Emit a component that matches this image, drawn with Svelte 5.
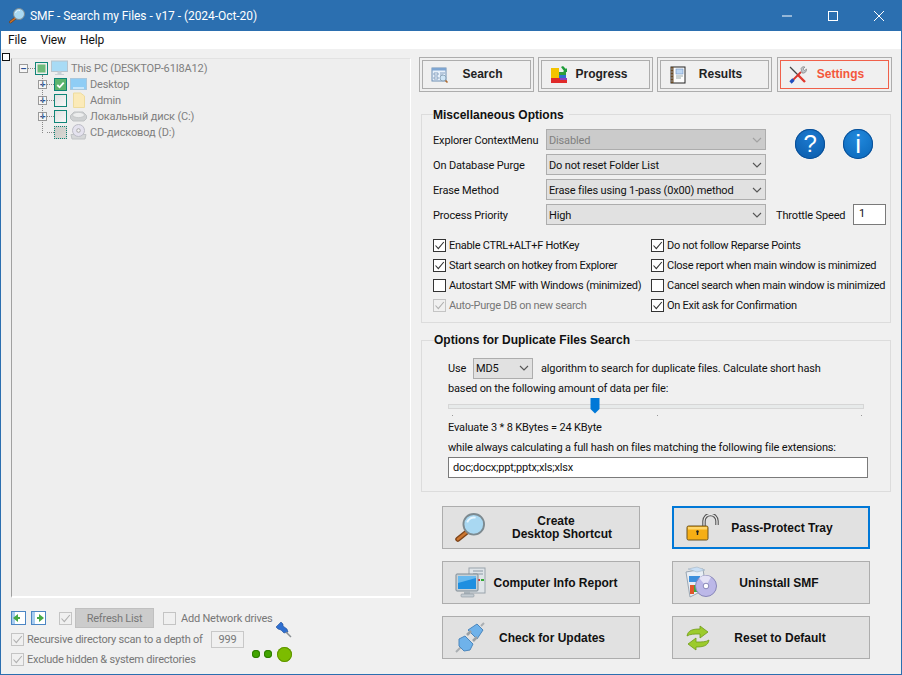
<script>
  const tabs = [
    { id: "search", label: "Search" },
    { id: "progress", label: "Progress" },
    { id: "results", label: "Results" },
    { id: "settings", label: "Settings" }
  ];

  const selects = [
    { label: "Explorer ContextMenu", value: "Disabled", disabled: true },
    { label: "On Database Purge", value: "Do not reset Folder List" },
    { label: "Erase Method", value: "Erase files using 1-pass (0x00) method" },
    { label: "Process Priority", value: "High" }
  ];

  const optsLeft = [
    { label: "Enable CTRL+ALT+F HotKey", on: true },
    { label: "Start search on hotkey from Explorer", on: true },
    { label: "Autostart SMF with Windows (minimized)", on: false },
    { label: "Auto-Purge DB on new search", on: true, disabled: true }
  ];
  const optsRight = [
    { label: "Do not follow Reparse Points", on: true },
    { label: "Close report when main window is minimized", on: true },
    { label: "Cancel search when main window is minimized", on: false },
    { label: "On Exit ask for Confirmation", on: true }
  ];

  const tree = [
    { label: "Desktop", state: "checked", icon: "desktop", exp: true },
    { label: "Admin", state: "", icon: "folder", exp: true },
    { label: "Локальный диск (C:)", state: "", icon: "disk", exp: true },
    { label: "CD-дисковод (D:)", state: "dotted", icon: "cd", exp: false }
  ];
</script>

{#snippet check(on, disabled, label)}
  <label class="check" class:disabled>
    <span class="box">
      {#if on}
        <svg width="13" height="13" viewBox="0 0 13 13"><path d="M2.5 6.500 5.300 9.600 10.800 3" fill="none" stroke="currentColor" stroke-width="1.100" /></svg>
      {/if}
    </span>
    {#if label}<span>{label}</span>{/if}
  </label>
{/snippet}

{#snippet chevron()}
  <svg class="chev" width="10" height="6" viewBox="0 0 10 6"><path d="M1 1 5 5 9 1" fill="none" stroke="#555" stroke-width="1.100" /></svg>
{/snippet}

{#snippet magnifier(size)}
  <svg width={size} height={size} viewBox="0 0 32 32">
    <path d="M13 20 3 28" stroke="#7d4318" stroke-width="5.500" stroke-linecap="round" />
    <path d="M13 20 3 28" stroke="#cc7630" stroke-width="2.500" stroke-linecap="round" />
    <circle cx="20" cy="12" r="11" fill="#a9d8f2" stroke="#7d8a90" stroke-width="2" />
    <path d="M13 10a7.500 7.500 0 0 1 9-5" fill="none" stroke="#e6f6ff" stroke-width="2" />
  </svg>
{/snippet}

{#snippet treeIcon(kind)}
  {#if kind === "pc"}
    <svg width="17" height="16" viewBox="0 0 17 16"><rect x="0.500" y="1" width="16" height="10.500" fill="#a8dbf5" stroke="#b8c4cc" /><path d="M7 12h3v2H7zM4 14.500h9" fill="#c8d0d6" stroke="#c8d0d6" /></svg>
  {:else if kind === "desktop"}
    <svg width="17" height="14" viewBox="0 0 17 14"><rect x="0.500" y="1.500" width="16" height="11" fill="#8fcdf5" stroke="#a9c7dc" /><path d="M3 11h11" stroke="#fff" /></svg>
  {:else if kind === "folder"}
    <svg width="12" height="16" viewBox="0 0 12 16"><path d="M.5 1h7l4 3v11.500h-11z" fill="#fbeab8" stroke="#eedc9e" /></svg>
  {:else if kind === "disk"}
    <svg width="17" height="11" viewBox="0 0 17 11"><path d="M.5 4.500 4 1h9l3.500 3.500v3L14 10H3L.5 7.500z" fill="#cfd1d2" stroke="#bfc2c4" /><ellipse cx="8.500" cy="4" rx="6" ry="2.600" fill="#eceded" stroke="#c8cacb" /></svg>
  {:else}
    <svg width="17" height="16" viewBox="0 0 17 16"><path d="M1 10.500h15l-1 4.500H2z" fill="#d6d8d9" stroke="#c0c3c5" /><circle cx="8.500" cy="6.500" r="6" fill="#e4e2ee" stroke="#bcbcc6" /><circle cx="8.500" cy="6.500" r="1.800" fill="#f4f4f4" stroke="#aaa" /></svg>
  {/if}
{/snippet}

{#snippet tabIcon(id)}
  {#if id === "search"}
    <svg width="18" height="18" viewBox="0 0 18 18"><rect x="1" y="2" width="14" height="13" fill="#e8f1fa" stroke="#6f8fb4" /><rect x="1" y="2" width="14" height="2.500" fill="#7fa6d2" /><path d="M3 7h4v2H3zM3 11h4v2H3zM9 7h5M9 9h3" fill="#fff" stroke="#6f8fb4" stroke-width=".8" /><circle cx="12" cy="12" r="3" fill="#cfe6f7" stroke="#8fa8bc" /><path d="m14.500 14.500 2 2" stroke="#b06a2c" stroke-width="1.600" /></svg>
  {:else if id === "progress"}
    <svg width="18" height="18" viewBox="0 0 18 18"><rect x="1" y="2" width="8" height="10" fill="#f4c400" /><rect x="9" y="6" width="7" height="3" fill="#2e9e3a" /><rect x="9" y="9" width="7" height="3" fill="#2d6fd0" /><rect x="1" y="12" width="16" height="5" fill="#e02a2a" /><rect x="10" y="12" width="7" height="2" fill="#8a3fc0" /><path d="m11 1 2-1 3 3 1-1v4h-4l1-1z" fill="#1f9d3a" /></svg>
  {:else if id === "results"}
    <svg width="18" height="18" viewBox="0 0 18 18"><rect x="2" y="1" width="14" height="16" fill="#fdfdfd" stroke="#222" /><rect x="2" y="1" width="2.500" height="16" fill="#6b4a24" /><path d="M1 3h3M1 6h3M1 9h3M1 12h3M1 15h3" stroke="#999" /><rect x="7" y="3" width="7" height="5" fill="#bcd6f2" stroke="#6c92c4" stroke-width=".6" /><path d="M7 10h7M7 12h5" stroke="#9aa" /></svg>
  {:else}
    <svg width="18" height="18" viewBox="0 0 18 18"><path d="M1 1 9 9" stroke="#444" stroke-width="1.200" /><path d="m9 9 7 7" stroke="#e0392e" stroke-width="2.400" /><path d="M3 15 12 6" stroke="#d8342c" stroke-width="1.800" /><path d="m1.500 16.500 3-3" stroke="#1f4fc0" stroke-width="3.200" /><path d="M12 2.500a3 3 0 0 1 4-1.500l-2 2 1.500 1.500 2-1.500a3.500 3.500 0 0 1-4.500 4z" fill="#c0c4c8" stroke="#666" stroke-width=".5" /></svg>
  {/if}
{/snippet}

{#snippet actionIcon(kind)}
  {#if kind === "magnifier"}
    {@render magnifier(30)}
  {:else if kind === "lock"}
    <svg width="34" height="28" viewBox="0 0 34 28">
      <path d="M18 13V7a6.500 6.500 0 0 1 13 0v4" fill="none" stroke="#555" stroke-width="3.500" />
      <path d="M18 13V7a6.500 6.500 0 0 1 13 0v4" fill="none" stroke="#e8e8e8" stroke-width="1.300" />
      <rect x="1" y="12" width="21" height="14" rx="1.500" fill="#f6ae14" stroke="#6a5220" />
      <rect x="2" y="13" width="19" height="2.500" fill="#ffd66a" />
      <path d="M11.500 17v4" stroke="#222" stroke-width="1.400" /><circle cx="11.500" cy="17.500" r="1.200" fill="#222" />
    </svg>
  {:else if kind === "computer"}
    <svg width="32" height="32" viewBox="0 0 32 32">
      <rect x="14" y="1" width="16" height="25" fill="#dfe4e8" stroke="#9aa4ac" />
      <path d="M18 4h10M18 7h10" stroke="#8a98a4" /><path d="M22 13h3" stroke="#d33" stroke-width="2" /><path d="M26 13h3" stroke="#3a3" stroke-width="2" />
      <rect x="1" y="7" width="22" height="17" rx="1" fill="#c7d0d6" stroke="#7f8b94" />
      <rect x="3" y="9" width="18" height="13" fill="#1f8fe0" />
      <path d="M3 16 21 11v-2H3z" fill="#67b9ef" />
      <path d="M9 24h6v3H9z" fill="#a9b3ba" /><rect x="6" y="27" width="13" height="3" rx="1" fill="#c4ccd2" stroke="#8b959d" stroke-width=".6" />
    </svg>
  {:else if kind === "uninstall"}
    <svg width="32" height="34" viewBox="0 0 32 34">
      <path d="M1 6 18 3l3 20-16 8z" fill="#e8eef5" stroke="#9aa6b2" />
      <path d="M3 3 12 1l8 3-8 2z" fill="#c9dff5" stroke="#9ab" stroke-width=".5" />
      <rect x="4" y="10" width="11" height="6" fill="#3d8fdc" />
      <rect x="5" y="19" width="4" height="9" fill="#e0562a" /><rect x="9" y="19" width="4" height="7" fill="#3cae3c" />
      <circle cx="21" cy="20" r="10.500" fill="#bcb8e8" stroke="#8886b8" />
      <path d="M21 20 14 12a10 10 0 0 1 12-1z" fill="#e4e2f6" />
      <circle cx="21" cy="20" r="2.800" fill="#fff" stroke="#8886b8" />
    </svg>
  {:else if kind === "plug"}
    <svg width="30" height="32" viewBox="0 0 30 32">
      <path d="m13 8 9-6 6 6-6 9z" fill="#6fb2ea" stroke="#4c86bc" />
      <path d="M1 30 6 25" stroke="#a9aeb2" stroke-width="2" /><path d="m26 4 3-3" stroke="#a9aeb2" stroke-width="2" />
      <path d="m4 17 6-3 8 8-3 6-6 1-5-5z" fill="#6fb2ea" stroke="#4c86bc" />
      <path d="m12 13 4-4M18 19l4-4" stroke="#9aa0a4" stroke-width="2.500" />
    </svg>
  {:else}
    <svg width="26" height="26" viewBox="0 0 26 26">
      <path d="M2 11C3 5 8 4 15 4V1l8 6-8 6V9C9 9 5 9 2 11z" fill="#9ccb2c" stroke="#6e9a18" stroke-width=".8" />
      <path d="M24 15c-1 6-6 7-13 7v3l-8-6 8-6v4c6 0 10 0 13-2z" fill="#9ccb2c" stroke="#6e9a18" stroke-width=".8" />
    </svg>
  {/if}
{/snippet}

{#snippet action(kind, lines, focused, pad)}
  <button class="action" class:focused style="padding-left:{pad}px">
    <span class="action-icon">{@render actionIcon(kind)}</span>
    <span class="action-label" class:single={lines.length === 1}>
      {#each lines as l, i}<span class:short={lines.length > 1 && i === 0}>{l}</span>{/each}
    </span>
  </button>
{/snippet}

<div class="window">
  <header class="titlebar">
    <span class="app-icon">{@render magnifier(16)}</span>
    <span class="title">SMF - Search my Files - v17 - (2024-Oct-20)</span>
    <div class="caption">
      <svg width="46" height="16" viewBox="0 0 46 16"><path d="M18 8h10" stroke="#fff" /></svg>
      <svg width="46" height="16" viewBox="0 0 46 16"><rect x="18.500" y="3.500" width="9" height="9" fill="none" stroke="#fff" /></svg>
      <svg width="46" height="16" viewBox="0 0 46 16"><path d="m18 3 10 10M28 3 18 13" stroke="#fff" /></svg>
    </div>
  </header>

  <nav class="menubar">
    <span>File</span><span>View</span><span>Help</span>
  </nav>

  <main class="client">
    <section class="left">
      <span class="corner"></span>
      <div class="tree">
        <div class="node root">
          <span class="exp">–</span>
          <span class="dots"></span>
          <span class="tcheck mixed"></span>
          <span class="ticon">{@render treeIcon("pc")}</span>
          <span class="tlabel">This PC (DESKTOP-61I8A12)</span>
        </div>
        <div class="children">
          <span class="vline"></span>
          {#each tree as n}
            <div class="node">
              {#if n.exp}<span class="exp">+</span>{:else}<span class="exp none"></span>{/if}
              <span class="dots"></span>
              <span class="tcheck {n.state}">
                {#if n.state === "checked"}
                  <svg width="12" height="12" viewBox="0 0 12 12"><path d="M2.500 6 5 8.500 9.500 3.500" fill="none" stroke="#fff" stroke-width="2" /></svg>
                {/if}
              </span>
              <span class="ticon">{@render treeIcon(n.icon)}</span>
              <span class="tlabel">{n.label}</span>
            </div>
          {/each}
        </div>
      </div>

      <div class="tree-controls">
        <div class="row first">
          <span class="nav-btn">
            <svg width="15" height="14" viewBox="0 0 15 14"><rect x=".5" y=".5" width="14" height="13" fill="#fff" stroke="#4c86c4" /><rect x="1" y="1" width="3" height="12" fill="#a8cdf0" /><path d="M2 7 7 3v8z" fill="#45a845" /><path d="M7 6h2v2H7z" fill="#45a845" /></svg>
          </span>
          <span class="nav-btn">
            <svg width="15" height="14" viewBox="0 0 15 14"><rect x=".5" y=".5" width="14" height="13" fill="#fff" stroke="#4c86c4" /><rect x="1" y="1" width="3" height="12" fill="#a8cdf0" /><path d="M13 7 8 3v8z" fill="#45a845" /><path d="M6 6h2v2H6z" fill="#45a845" /></svg>
          </span>
          <span class="refresh-check">{@render check(true, true, "")}</span>
          <button class="refresh">Refresh List</button>
          <span class="net-check">{@render check(false, true, "Add Network drives")}</span>
          <svg class="pin" width="17" height="17" viewBox="0 0 17 17">
            <path d="M1 6 6 1 8 3 8 5 12 8 13 11 9 12 6 9 3 8Z" fill="#2f6fd0" stroke="#234f96" stroke-width=".6" />
            <path d="m11 11 5 5" stroke="#8a8f94" stroke-width="1.500" />
          </svg>
        </div>
        <div class="row depth-row">
          {@render check(true, true, "Recursive directory scan to a depth of")}
          <span class="depth">999</span>
        </div>
        <div class="row">
          {@render check(true, true, "Exclude hidden & system directories")}
          <span class="leds"><i></i><i></i><i class="big"></i></span>
        </div>
      </div>
    </section>

    <section class="right">
      <div class="tabs">
        {#each tabs as t}
          <button class="tab" class:active={t.id === "settings"}>
            <span class="tab-inner">
              {@render tabIcon(t.id)}
              <b>{t.label}</b>
            </span>
          </button>
        {/each}
      </div>

      <fieldset class="group misc">
        <legend>Miscellaneous Options</legend>
        <div class="misc-top">
          <div class="selects">
            {#each selects as s}
              <div class="sel-row">
                <span class="sel-label">{s.label}</span>
                <div class="select" class:disabled={s.disabled}>
                  <span class="sel-value">{s.value}</span>
                  {@render chevron()}
                </div>
              </div>
            {/each}
          </div>
          <div class="side">
            <div class="info-btns">
              <span class="round q">?</span>
              <span class="round i">i</span>
            </div>
            <div class="throttle">
              <span class="throttle-label">Throttle Speed</span>
              <span class="num">1</span>
            </div>
          </div>
        </div>
        <div class="opts">
          <div class="opt-col">
            {#each optsLeft as o}{@render check(o.on, o.disabled, o.label)}{/each}
          </div>
          <div class="opt-col">
            {#each optsRight as o}{@render check(o.on, o.disabled, o.label)}{/each}
          </div>
        </div>
      </fieldset>

      <fieldset class="group dup">
        <legend>Options for Duplicate Files Search</legend>
        <div class="line use">
          <span class="use-label">Use</span>
          <div class="select md5"><span>MD5</span>{@render chevron()}</div>
          <span>algorithm to search for duplicate files. Calculate short hash</span>
        </div>
        <div class="line">based on the following amount of data per file:</div>
        <div class="slider">
          <div class="track"></div>
          <svg class="thumb" width="10" height="16" viewBox="0 0 10 16"><path d="M.5 0h9v11l-4.500 4.500L.5 11z" fill="#0078d7" /></svg>
          <div class="ticks"><i></i><i></i><i></i></div>
        </div>
        <div class="line">Evaluate 3 * 8 KBytes = 24 KByte</div>
        <div class="line">while always calculating a full hash on files matching the following file extensions:</div>
        <div class="ext">doc;docx;ppt;pptx;xls;xlsx</div>
      </fieldset>

      <div class="actions">
        {@render action("magnifier", ["Create", "Desktop Shortcut"], false, 48)}
        {@render action("lock", ["Pass-Protect Tray"], true, 28)}
        {@render action("computer", ["Computer Info Report"], false, 35)}
        {@render action("uninstall", ["Uninstall SMF"], false, 22)}
        {@render action("plug", ["Check for Updates"], false, 28)}
        {@render action("refresh", ["Reset to Default"], false, 24)}
      </div>
    </section>
  </main>
</div>

<style>
  :global(body) {
    margin: 0;
    background: #f0f0f0;
  }

  .window {
    width: 902px;
    height: 675px;
    box-sizing: border-box;
    border: 1px solid #2b6fb0;
    border-top: none;
    display: flex;
    flex-direction: column;
    font-family: Roboto, "Liberation Sans", sans-serif;
    font-size: 11px;
    letter-spacing: -0.15px;
    color: #111;
    background: #f0f0f0;
    overflow: hidden;
  }

  .titlebar {
    height: 31px;
    flex: none;
    margin: 0 -1px;
    background: #2b6fb0;
    color: #fff;
    display: flex;
    align-items: center;
    font-size: 12px;
    letter-spacing: -0.05px;
    padding-left: 9px;
  }
  .app-icon { display: flex; margin-right: 5px; }
  .title { flex: 1; }
  .caption { display: flex; }

  .menubar {
    height: 18px;
    flex: none;
    background: #fff;
    display: flex;
    align-items: center;
    gap: 14px;
    padding-left: 7px;
    font-size: 12px;
    letter-spacing: -0.1px;
  }

  .client {
    flex: 1;
    display: flex;
    min-height: 0;
  }

  .left {
    width: 418px;
    flex: none;
    position: relative;
    display: flex;
    flex-direction: column;
    padding: 9px 0 0 10px;
    box-sizing: border-box;
  }
  .corner {
    position: absolute;
    left: 1px;
    top: 4px;
    width: 6px;
    height: 6px;
    background: #fff;
    border: 1px solid #111;
  }

  .tree {
    width: 400px;
    height: 540px;
    flex: none;
    box-sizing: border-box;
    border-left: 1px solid #a0a0a0;
    border-top: 1px solid #e2e2e2;
    border-bottom: 2px solid #fff;
    border-right: 1px solid #fff;
    background: #eeeeee;
    padding: 1px 0 0 7px;
    color: #7f7f7f;
  }
  .node {
    height: 16px;
    display: flex;
    align-items: center;
  }
  .exp {
    width: 9px;
    height: 9px;
    box-sizing: border-box;
    border: 1px solid #999;
    background: #f6f6f6;
    color: #2a4f96;
    font: bold 10px/7px "Liberation Sans", sans-serif;
    text-align: center;
    flex: none;
  }
  .exp.none { border: none; background: none; }
  .dots {
    width: 7px;
    border-top: 1px dotted #888;
    flex: none;
  }
  .tcheck {
    width: 13px;
    height: 13px;
    box-sizing: border-box;
    border: 1px solid #0f8577;
    background: linear-gradient(135deg, #e0e0e0, #f8f8f8);
    flex: none;
    display: flex;
  }
  .tcheck.mixed {
    background: #6cbb7a;
    box-shadow: inset 0 0 0 1.500px #eee;
  }
  .tcheck.checked { background: #5cb46e; }
  .tcheck.dotted {
    border-style: dotted;
    background: linear-gradient(135deg, #cbcbc7, #d8d8d4);
  }
  .ticon {
    width: 17px;
    margin: 0 3px 0 3px;
    display: flex;
    justify-content: center;
    flex: none;
  }
  .tlabel { white-space: nowrap; }
  .children {
    position: relative;
    padding-left: 19px;
  }
  .vline {
    position: absolute;
    left: 23px;
    top: -1px;
    bottom: 7px;
    border-left: 1px dotted #888;
  }

  .tree-controls {
    display: flex;
    flex-direction: column;
    padding-top: 9px;
    color: #777;
    letter-spacing: -0.22px;
  }
  .row {
    display: flex;
    align-items: center;
    height: 20px;
    width: 281px;
  }
  .row.first { height: 22px; }
  .row.depth-row { width: 233px; }
  .nav-btn { display: flex; margin-right: 5px; }
  .refresh-check { margin: 0 3px 0 8px; display: flex; }
  .refresh {
    width: 79px;
    height: 20px;
    flex: none;
    border: 1px solid #c0c0c0;
    background: #cccccc;
    color: #777;
    font: inherit;
    letter-spacing: inherit;
    padding: 0;
  }
  .net-check { margin-left: 9px; }
  .net-check .check { gap: 5px; }
  .pin { margin: 22px 0 0 auto; flex: none; }
  .depth {
    width: 33px;
    height: 17px;
    box-sizing: border-box;
    border: 1px solid #c8c8c8;
    background: #f0f0f0;
    text-align: center;
    line-height: 15px;
    margin-left: auto;
    flex: none;
  }
  .leds {
    display: flex;
    align-items: center;
    gap: 4px;
    margin: -10px 0 0 auto;
  }
  .leds i {
    width: 8px;
    height: 8px;
    border-radius: 50%;
    background: #42a400;
    box-shadow: inset 0 0 0 1px #2d7d00;
  }
  .leds i.big {
    width: 15px;
    height: 15px;
    margin-left: 1px;
    background: #7cbc00;
    box-shadow: inset 0 0 0 1px #5f9400;
  }

  .check {
    display: flex;
    align-items: center;
    gap: 3px;
    white-space: nowrap;
    height: 20px;
  }
  .box {
    width: 13px;
    height: 13px;
    box-sizing: border-box;
    border: 1px solid #333;
    background: #fff;
    display: flex;
    flex: none;
    color: #333;
  }
  .box svg { margin: -1px; flex: none; }
  .check.disabled { color: #777; }
  .check.disabled .box {
    border-color: #c4c4c4;
    color: #b0b0b0;
    background: #f0f0f0;
  }

  .right {
    width: 475px;
    flex: none;
    display: flex;
    flex-direction: column;
  }
  .tabs {
    display: flex;
    gap: 4px;
    margin-top: 8px;
    height: 35px;
  }
  .tab {
    width: 115px;
    height: 35px;
    padding: 2px;
    box-sizing: border-box;
    border: 1px solid #adadad;
    background: #f0f0f0;
    font: inherit;
  }
  .tab:last-child { margin-left: 1px; }
  .tab-inner {
    height: 100%;
    box-sizing: border-box;
    border: 1px solid #adadad;
    display: flex;
    align-items: center;
    padding: 0 14px 0 8px;
    font: 700 12px "Liberation Sans", sans-serif;
    letter-spacing: 0;
  }
  .tab b { color: #222; flex: 1; text-align: center; padding-bottom: 1px; }
  .tab.active .tab-inner { border-color: #f0604a; }
  .tab.active b { color: #f4573c; }

  .group {
    margin: 0 0 0 2px;
    padding: 0 0 0 11px;
    width: 470px;
    box-sizing: border-box;
    border: 1px solid #dcdcdc;
    min-width: 0;
  }
  .group legend {
    padding: 0 5px 0 0;
    font: 700 12px/14px "Liberation Sans", sans-serif;
    letter-spacing: 0;
    color: #111;
  }
  .misc { margin-top: 15px; height: 216px; }
  .misc legend { position: relative; top: 1px; }
  .dup { margin-top: 10px; height: 159px; padding-left: 26px; }
  .dup legend { margin-left: -14px; }

  .misc-top { display: flex; margin-top: 8px; }
  .selects { display: flex; flex-direction: column; gap: 4px; }
  .sel-row { display: flex; align-items: center; height: 21px; }
  .sel-label { width: 113px; white-space: nowrap; flex: none; padding-top: 1px; }
  .sel-value { padding-top: 1px; }
  .select {
    width: 220px;
    height: 21px;
    box-sizing: border-box;
    border: 1px solid #adadad;
    background: #e1e1e1;
    display: flex;
    align-items: center;
    justify-content: space-between;
    padding: 0 3px 0 2px;
    flex: none;
  }
  .select.disabled { background: #cbcbcb; color: #808080; }
  .select.disabled .chev { opacity: .35; }
  .side {
    margin-left: 10px;
    display: flex;
    flex-direction: column;
    justify-content: space-between;
  }
  .info-btns {
    display: flex;
    gap: 18px;
    margin: 0 0 0 19px;
  }
  .round {
    width: 30px;
    height: 30px;
    border-radius: 50%;
    color: #fff;
    display: flex;
    align-items: center;
    justify-content: center;
    font-family: "Liberation Sans", sans-serif;
    font-size: 24px;
    line-height: 1;
    box-shadow: inset 0 0 0 1px #0a4f96;
  }
  .round.q { background: radial-gradient(circle at 50% 30%, #1c7ad0, #0a5aa8); }
  .round.i { background: radial-gradient(circle at 50% 30%, #2088dc, #0a66b8); font-size: 26px; }
  .throttle {
    display: flex;
    align-items: center;
    height: 21px;
    white-space: nowrap;
  }
  .throttle-label { width: 77px; flex: none; padding-top: 1px; }
  .num {
    width: 33px;
    height: 21px;
    box-sizing: border-box;
    border: 1px solid #7a7a7a;
    background: #fff;
    padding-left: 5px;
    line-height: 18px;
    flex: none;
  }

  .opts {
    display: flex;
    margin-top: 10px;
    letter-spacing: -0.28px;
  }
  .opt-col { width: 218px; }

  .line {
    height: 20px;
    display: flex;
    align-items: center;
    white-space: pre;
  }
  .use { margin-top: 11px; gap: 8px; }
  .use-label { width: 17px; flex: none; }
  .select.md5 { width: 60px; }
  .slider {
    position: relative;
    width: 416px;
    height: 19px;
  }
  .track {
    position: absolute;
    left: 0;
    right: 0;
    top: 6px;
    height: 3px;
    background: #e7eaea;
    border: 1px solid #d6d6d6;
  }
  .thumb { position: absolute; left: 142px; top: 0; }
  .ticks {
    position: absolute;
    left: 4px;
    right: 2px;
    top: 17px;
    display: flex;
    justify-content: space-between;
  }
  .ticks i { width: 1px; height: 1px; background: #999; }
  .ext {
    width: 420px;
    height: 21px;
    box-sizing: border-box;
    border: 1px solid #7a7a7a;
    background: #fff;
    padding-left: 4px;
    line-height: 19px;
  }

  .actions {
    display: grid;
    grid-template-columns: 198px 198px;
    column-gap: 32px;
    row-gap: 12px;
    grid-auto-rows: 43px;
    margin: 14px 0 0 23px;
  }
  .action {
    position: relative;
    box-sizing: border-box;
    border: 1px solid #adadad;
    background: #e1e1e1;
    display: flex;
    align-items: center;
    justify-content: center;
    font: 700 12px "Liberation Sans", sans-serif;
    letter-spacing: 0;
    color: #111;
  }
  .action.focused { border: 2px solid #0078d7; }
  .action-icon {
    position: absolute;
    left: 12px;
    top: 50%;
    transform: translateY(-50%);
    display: flex;
  }
  .action-label {
    display: flex;
    flex-direction: column;
    align-items: center;
    line-height: 13px;
  }
  .action-label.single { padding-top: 2px; }
  .short { margin-right: 12px; }
</style>
